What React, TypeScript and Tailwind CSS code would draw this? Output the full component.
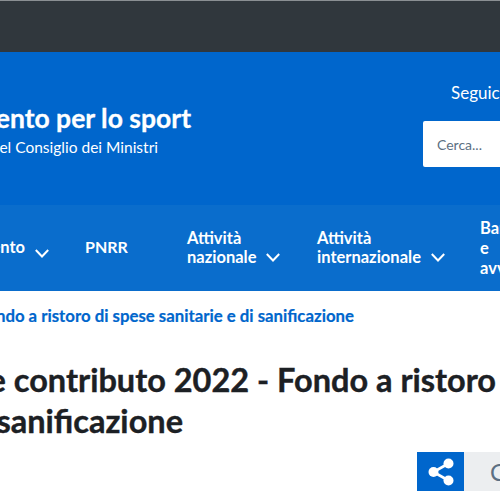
const font = "font-['Lato','Liberation_Sans',sans-serif]";

const ShareIcon = () => (
  <svg viewBox="0 0 28 28" className="w-[28px] h-[28px]" fill="white">
    <circle cx="6.5" cy="14" r="5" />
    <circle cx="21.5" cy="5.5" r="5" />
    <circle cx="21.5" cy="22.5" r="5" />
    <path d="M6.5 14 21.5 5.5M6.5 14l15 8.5" stroke="white" strokeWidth="2.6" />
  </svg>
);

const NavChevron = () => (
  <svg viewBox="0 0 14 9" className="w-[14px] h-[9px] shrink-0" fill="none" stroke="white" strokeWidth="2">
    <path d="M.8 1 7 7.5 13.2 1" />
  </svg>
);

const App = () => {
  return (
    <div className={`w-[500px] h-[500px] overflow-hidden bg-white ${font}`}>
      {/* top bar */}
      <div className="h-[52px] bg-[#30373d] border-t border-[#8a8f93]" />

      {/* header */}
      <div className="h-[153px] bg-[#0066cc] flex justify-between">
        <div className="pt-[50px] flex flex-col whitespace-nowrap text-white">
          <div className="w-[191px] flex justify-end text-[26.5px] leading-[32px] font-bold [-webkit-text-stroke:0.3px_white]">Dipartimento per lo sport</div>
          <div className="w-[158px] flex justify-end text-[15.5px] leading-[22px] mt-[2px]">Presidenza del Consiglio dei Ministri</div>
        </div>
        <div className="w-[77px] pt-[30px] flex flex-col whitespace-nowrap">
          <div className="text-[17px] leading-[22px] text-white ml-[28px]">Seguici</div>
          <div className="h-[46px] mt-[17px] bg-white pl-[14px] flex items-center rounded-l-[2px] text-[14px] text-[#5c6f82]">
            Cerca...
          </div>
        </div>
      </div>

      {/* nav */}
      <div className="h-[86px] bg-[#0a6dcc] flex items-center text-white text-[16.5px] leading-[19px] font-bold whitespace-nowrap">
        <div className="w-[85px] flex items-center shrink-0 mb-[1px]">
          <div className="w-[25px] flex justify-end">Dipartimento</div>
          <div className="ml-[10px] mt-[11px]"><NavChevron /></div>
        </div>
        <div className="w-[102px] shrink-0 text-[16px] mb-[3px]">PNRR</div>
        <div className="w-[130px] shrink-0 flex items-end">
          <div>Attività<br />nazionale</div>
          <div className="ml-[9px] mb-[5px]"><NavChevron /></div>
        </div>
        <div className="w-[163px] shrink-0 flex items-end">
          <div>Attività<br />internazionale</div>
          <div className="ml-[10px] mb-[5px]"><NavChevron /></div>
        </div>
        <div className="leading-[20px]">Bandi<br />e<br />avvisi</div>
      </div>

      {/* breadcrumb */}
      <div className="h-[50px] pt-[14px] w-[354px] flex justify-end whitespace-nowrap text-[16.8px] leading-[22px] font-bold text-[#0066cc] [-webkit-text-stroke:0.2px_#0066cc]">
        Fondo a ristoro di spese sanitarie e di sanificazione
      </div>

      {/* title */}
      <div className="pt-[18px] text-[32.5px] leading-[41px] font-bold text-[#1c2024] whitespace-nowrap [-webkit-text-stroke:0.4px_#1c2024]">
        <div className="w-[496px] flex justify-end">Modulo di domanda e contributo 2022 - Fondo a ristoro</div>
        <div className="w-[183px] flex justify-end">di spese sanitarie e di sanificazione</div>
      </div>

      {/* share */}
      <div className="mt-[11px] ml-[417px] flex h-[39px] w-[83px]">
        <div className="w-[47px] bg-[#0066cc] flex items-center justify-center shrink-0">
          <ShareIcon />
        </div>
        <div className="flex-1 bg-[#eceef0] pl-[26px] text-[#5c6f82] text-[24px] leading-[39px] overflow-hidden">C</div>
      </div>
    </div>
  );
};

export default App;
